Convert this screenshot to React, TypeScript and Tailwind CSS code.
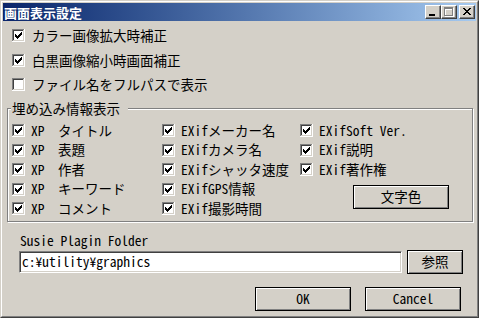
import React from "react";

const F = "font-['Noto_Sans_Mono_CJK_JP','Noto_Sans_CJK_JP',monospace]";

function Check({ checked }: { checked: boolean }) {
  const px: [number, number, number][] = [
    [9, 3, 1],
    [8, 4, 2],
    [3, 5, 1],
    [7, 5, 3],
    [3, 6, 2],
    [6, 6, 3],
    [3, 7, 5],
    [4, 8, 3],
    [5, 9, 1],
  ];
  return (
    <svg width="13" height="13" viewBox="0 0 13 13" shapeRendering="crispEdges" className="block shrink-0">
      <rect x="0" y="0" width="12" height="1" fill="#808080" />
      <rect x="0" y="0" width="1" height="12" fill="#808080" />
      <rect x="1" y="1" width="10" height="1" fill="#404040" />
      <rect x="1" y="1" width="1" height="10" fill="#404040" />
      <rect x="0" y="12" width="13" height="1" fill="#ffffff" />
      <rect x="12" y="0" width="1" height="13" fill="#ffffff" />
      <rect x="1" y="11" width="11" height="1" fill="#d4d0c8" />
      <rect x="11" y="1" width="1" height="11" fill="#d4d0c8" />
      <rect x="2" y="2" width="9" height="9" fill="#ffffff" />
      {checked &&
        px.map(([x, y, w], i) => <rect key={i} x={x} y={y} width={w} height="1" fill="#000" />)}
    </svg>
  );
}

function CheckRow({ label, checked = true, gap = "gap-[6px]" }: { label: string; checked?: boolean; gap?: string }) {
  return (
    <div className={`flex h-[13px] items-center ${gap}`}>
      <Check checked={checked} />
      <span className="whitespace-pre leading-none">{label}</span>
    </div>
  );
}

function Btn({ children, className = "" }: { children: React.ReactNode; className?: string }) {
  return (
    <div
      className={`flex items-center justify-center border border-black bg-[#d4d0c8] shadow-[inset_1px_1px_0_#ffffff,inset_-1px_-1px_0_#808080] leading-none ${className}`}
    >
      {children}
    </div>
  );
}

function CapBtn({ children }: { children: React.ReactNode }) {
  return (
    <div className="h-[14px] w-[16px] border border-t-white border-l-white border-r-[#404040] border-b-[#404040] bg-[#d4d0c8] shadow-[inset_-1px_-1px_0_#808080]">
      <svg width="14" height="12" viewBox="0 0 14 12" shapeRendering="crispEdges" className="block">
        {children}
      </svg>
    </div>
  );
}

export default function App() {
  const closePx: [number, number, number][] = [
    [0, 0, 2], [6, 0, 2],
    [1, 1, 2], [5, 1, 2],
    [2, 2, 4],
    [3, 3, 2],
    [2, 4, 4],
    [1, 5, 2], [5, 5, 2],
    [0, 6, 2], [6, 6, 2],
  ];
  return (
    <div className={`h-[318px] w-[479px] bg-[#d4d0c8] text-black ${F} text-[13.5px]`}>
      <div className="h-full w-full border border-t-[#d4d0c8] border-l-[#d4d0c8] border-r-[#404040] border-b-[#404040]">
        <div className="flex h-full w-full flex-col border border-t-white border-l-white border-r-[#808080] border-b-[#808080] p-[1px]">
          {/* title bar */}
          <div className="flex h-[18px] shrink-0 items-center bg-linear-to-r from-[#0a246a] to-[#a6caf0] pl-[1px] pr-[1px]">
            <span className="font-['Noto_Sans_CJK_JP',sans-serif] text-[13px] font-bold leading-none text-white">
              画面表示設定
            </span>
            <div className="ml-auto flex items-center">
              <CapBtn>
                <rect x="3" y="8" width="6" height="2" fill="#000" />
              </CapBtn>
              <CapBtn>
                <g transform="translate(1,1)">
                  <rect x="2" y="1" width="9" height="2" fill="#ffffff" />
                  <rect x="2" y="1" width="1" height="9" fill="#ffffff" />
                  <rect x="10" y="1" width="1" height="9" fill="#ffffff" />
                  <rect x="2" y="9" width="9" height="1" fill="#ffffff" />
                </g>
                <rect x="2" y="1" width="9" height="2" fill="#808080" />
                <rect x="2" y="1" width="1" height="9" fill="#808080" />
                <rect x="10" y="1" width="1" height="9" fill="#808080" />
                <rect x="2" y="9" width="9" height="1" fill="#808080" />
              </CapBtn>
              <div className="ml-[2px]">
                <CapBtn>
                  <g transform="translate(3,2)">
                    {closePx.map(([x, y, w], i) => (
                      <rect key={i} x={x} y={y} width={w} height="1" fill="#000" />
                    ))}
                  </g>
                </CapBtn>
              </div>
            </div>
          </div>

          {/* top options */}
          <div className="flex flex-col pl-[9px] pt-[8px]">
            <CheckRow label="カラー画像拡大時補正" gap="gap-[7px]" />
            <div className="mt-[12px]">
              <CheckRow label="白黒画像縮小時画面補正" gap="gap-[7px]" />
            </div>
            <div className="mt-[11px]">
              <CheckRow label="ファイル名をフルパスで表示" checked={false} gap="gap-[7px]" />
            </div>
          </div>

          {/* group box */}
          <div className="relative ml-[4px] mt-[17px] h-[114px] w-[466px] border border-[#808080] shadow-[inset_1px_1px_0_#ffffff,1px_1px_0_#ffffff]">
            <span className="absolute -top-[8px] left-[3px] whitespace-pre bg-[#d4d0c8] pl-[1px] pr-[8px] leading-[14px]">
              埋め込み情報表示
            </span>
            <div className="flex pl-[4px] pt-[15px]">
              <div className="flex w-[150px] flex-col gap-[6.5px]">
                <CheckRow label={"XP\u3000タイトル"} />
                <CheckRow label={"XP\u3000表題"} />
                <CheckRow label={"XP\u3000作者"} />
                <CheckRow label={"XP\u3000キーワード"} />
                <CheckRow label={"XP\u3000コメント"} />
              </div>
              <div className="flex w-[138px] flex-col gap-[6.5px]">
                <CheckRow label="EXifメーカー名" />
                <CheckRow label="EXifカメラ名" />
                <CheckRow label="EXifシャッタ速度" />
                <CheckRow label="EXifGPS情報" />
                <CheckRow label="EXif撮影時間" />
              </div>
              <div className="flex flex-col gap-[6.5px]">
                <CheckRow label="EXifSoft Ver." />
                <CheckRow label="EXif説明" />
                <CheckRow label="EXif著作権" />
                <Btn className="ml-[53px] mt-[2.5px] h-[24px] w-[96px]">文字色</Btn>
              </div>
            </div>
          </div>

          {/* susie folder */}
          <div className="ml-[17px] mt-[11px] h-[14px] whitespace-pre leading-[14px]">Susie Plagin Folder</div>
          <div className="ml-[16px] mt-[3px] flex items-center gap-[5px]">
            <div className="flex h-[22px] w-[383px] items-center border border-t-[#808080] border-l-[#808080] border-b-white border-r-white bg-white pl-[2px] shadow-[inset_1px_1px_0_#404040,inset_-1px_-1px_0_#d4d0c8]">
              <span className="whitespace-pre leading-none">c:¥utility¥graphics</span>
            </div>
            <Btn className="h-[24px] w-[56px]">参照</Btn>
          </div>

          {/* ok / cancel */}
          <div className="ml-[252px] mt-[13px] flex gap-[14px]">
            <Btn className="h-[24px] w-[96px]">OK</Btn>
            <Btn className="h-[24px] w-[96px]">Cancel</Btn>
          </div>
        </div>
      </div>
    </div>
  );
}
